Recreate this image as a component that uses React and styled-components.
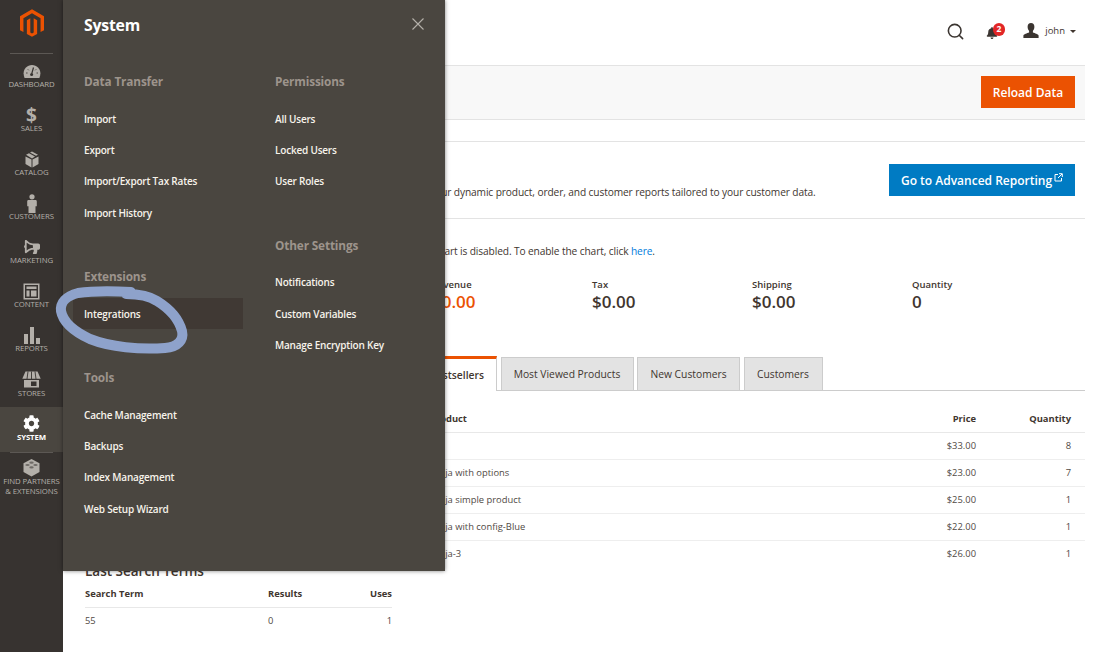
import React from "react";
import styled, { createGlobalStyle } from "styled-components";
import { FaCog, FaBell, FaBullhorn } from "react-icons/fa";
import { Search } from "lucide-react";

const Global = createGlobalStyle`
  html, body { margin: 0; padding: 0; background: #fff; }
  * { box-sizing: border-box; }
  body { font-family: "Open Sans", "Liberation Sans", sans-serif; color: #41362f; }
`;

const Page = styled.div`
  position: relative;
  width: 1100px;
  height: 652px;
  overflow: hidden;
  display: flex;
  background: #fff;
`;

const Sidebar = styled.nav`
  width: 63px;
  flex: none;
  height: 652px;
  background: #373330;
  display: flex;
  flex-direction: column;
  align-items: stretch;
`;

const LogoBox = styled.div`
  height: 54px;
  margin: 0 10px;
  padding-top: 9px;
  border-bottom: 1px solid #5c5854;
  display: flex;
  justify-content: center;
  align-items: flex-start;
`;

const SideItem = styled.div`
  height: ${(p) => p.$h || 44.1}px;
  display: flex;
  flex-direction: column;
  align-items: center;
  background: ${(p) => (p.$active ? "#4a4640" : "transparent")};
  color: ${(p) => (p.$active ? "#fff" : "#b3afa9")};
  padding-top: ${(p) => p.$pt ?? 9.5}px;
`;

const SideIcon = styled.div`
  height: 15px;
  display: flex;
  align-items: center;
  justify-content: center;
`;

const Dollar = styled.span`
  font: 700 19px/20px "Open Sans", sans-serif;
`;

const Megaphone = styled(FaBullhorn)`
  transform: scaleX(-1);
`;

const SideLabel = styled.div`
  font-size: 7.8px;
  line-height: 10px;
  margin-top: 0.5px;
  letter-spacing: -0.1px;
  text-transform: uppercase;
  text-align: center;
  font-weight: ${(p) => (p.$active ? 700 : 400)};
  white-space: nowrap;
`;

const Divider = styled.div`
  height: 1px;
  margin: 0 10px;
  background: #5c5854;
`;

const Main = styled.main`
  flex: 1;
  min-width: 0;
  padding-right: 15px;
  display: flex;
  flex-direction: column;
`;

const TopBar = styled.header`
  height: 65px;
  display: flex;
  align-items: center;
  justify-content: flex-end;
  padding-right: 9px;
`;

const SearchWrap = styled.div`
  display: flex;
  margin-right: 21px;
  color: #3b3531;
  margin-top: -3px;
`;

const BellWrap = styled.div`
  position: relative;
  display: flex;
  color: #3b3531;
  margin-right: 25px;
  margin-top: 1px;
`;

const Badge = styled.span`
  position: absolute;
  left: 6.5px;
  top: -4px;
  width: 12.5px;
  height: 12.5px;
  border-radius: 50%;
  background: #e22626;
  color: #fff;
  font: 700 8.5px/12.5px "Open Sans", sans-serif;
  text-align: center;
`;

const UserName = styled.span`
  font-size: 9.5px;
  margin-left: 6px;
  color: #41362f;
`;

const UserBox = styled.div`
  display: flex;
  align-items: center;
  margin-top: -4px;
`;

const Caret = styled.span`
  width: 0;
  height: 0;
  margin-left: 5px;
  margin-top: 2px;
  border-left: 3px solid transparent;
  border-right: 3px solid transparent;
  border-top: 3.5px solid #41362f;
`;

const ActionBar = styled.div`
  height: 55px;
  background: #f8f8f8;
  border-top: 1px solid #e3e3e3;
  border-bottom: 1px solid #e3e3e3;
  display: flex;
  align-items: center;
  justify-content: flex-end;
  padding: 0 10px 1px 0;
`;

const OrangeButton = styled.button`
  width: 94px;
  height: 32px;
  border: none;
  background: #eb5202;
  color: #fff;
  font: 600 12px "Open Sans", sans-serif;
  padding: 0;
`;

const ReportSection = styled.section`
  margin-top: 21px;
  height: 78px;
  border-top: 1px solid #e3e3e3;
  border-bottom: 1px solid #e3e3e3;
  display: flex;
  justify-content: space-between;
  padding: 22px 10px 0 22px;
`;

const ReportText = styled.div`
  display: flex;
  flex-direction: column;
  white-space: nowrap;
`;

const ReportTitle = styled.h2`
  margin: 0 0 1px;
  font-size: 14px;
  line-height: 20px;
  font-weight: 600;
  color: #41362f;
`;

const ReportDesc = styled.p`
  margin: 0;
  font-size: 10.2px;
  letter-spacing: -0.12px;
  line-height: 14px;
  color: #41362f;
`;

const BlueButton = styled.button`
  width: 186px;
  height: 32px;
  border: none;
  background: #007bc3;
  color: #fff;
  font: 600 12px "Open Sans", sans-serif;
  display: flex;
  align-items: center;
  justify-content: center;
  gap: 2px;
  padding: 0;
`;

const ChartNote = styled.p`
  margin: 25px 0 0 369px;
  font-size: 10.2px;
  letter-spacing: -0.12px;
  line-height: 14px;
  color: #41362f;
`;

const NoteLink = styled.span`
  color: #007bdb;
`;

const Totals = styled.div`
  display: flex;
  margin: 20px 0 0 49px;
`;

const Total = styled.div`
  width: 160px;
  display: flex;
  flex-direction: column;
`;

const TotalLabel = styled.div`
  font-size: 9.5px;
  line-height: 13px;
  font-weight: 600;
  color: #41362f;
`;

const TotalValue = styled.div`
  font-size: 17px;
  line-height: 21px;
  font-weight: 600;
  color: ${(p) => (p.$red ? "#eb5202" : "#41362f")};
`;

const Columns = styled.div`
  display: grid;
  grid-template-columns: 307px 673px;
  column-gap: 20px;
  margin-left: 22px;
`;

const LeftCol = styled.div`
  padding-top: 250px;
`;

const SearchTitle = styled.h3`
  margin: 0;
  font-size: 13.5px;
  line-height: 18px;
  font-weight: 600;
  color: #41362f;
`;

const RightCol = styled.div`
  margin-top: 44px;
`;

const Tabs = styled.div`
  display: flex;
  align-items: flex-end;
  gap: 3.5px;
  height: 35px;
  border-bottom: 1px solid #ccc;
`;

const Tab = styled.div`
  width: ${(p) => p.$w}px;
  height: ${(p) => (p.$active ? 35 : 34)}px;
  margin-bottom: -1px;
  display: flex;
  align-items: center;
  justify-content: center;
  font-size: 10.3px;
  color: #41362f;
  padding-left: ${(p) => (p.$active ? 6 : 0)}px;
  font-weight: ${(p) => (p.$active ? 600 : 400)};
  background: ${(p) => (p.$active ? "#fff" : "#e3e3e3")};
  border: 1px solid #ccc;
  border-bottom: ${(p) => (p.$active ? "none" : "1px solid #ccc")};
  border-top: ${(p) => (p.$active ? "3px solid #eb5202" : "1px solid #ccc")};
  border-left: ${(p) => (p.$active ? "none" : "1px solid #ccc")};
`;

const DataTable = styled.table`
  width: 100%;
  border-collapse: collapse;
  table-layout: fixed;
  font-size: 9.4px;
  color: #514a45;
`;

const WideTable = styled(DataTable)`
  margin-top: 14px;
`;

const Th = styled.th`
  height: 27px;
  padding: 0 ${(p) => p.$pr ?? 0}px 0 ${(p) => p.$pl ?? 0}px;
  text-align: ${(p) => p.$align || "left"};
  font-weight: 700;
  color: #41362f;
  border-bottom: 1px solid #e8e8e8;
  width: ${(p) => (p.$w ? `${p.$w}px` : "auto")};
`;

const Td = styled.td`
  height: 27px;
  padding: 0 ${(p) => p.$pr ?? 0}px 0 ${(p) => p.$pl ?? 0}px;
  text-align: ${(p) => p.$align || "left"};
  border-bottom: 1px solid ${(p) => (p.$last ? "transparent" : "#eeeeee")};
`;

const Panel = styled.aside`
  position: absolute;
  left: 63px;
  top: 0;
  width: 382px;
  height: 571px;
  background: #4a4640;
  box-shadow: 0 0 4px rgba(0, 0, 0, 0.5);
  color: #fff;
  padding: 15px 0 0 21px;
`;

const PanelTitle = styled.h1`
  margin: 0 0 35px;
  font-size: 15.8px;
  line-height: 20px;
  font-weight: 700;
  letter-spacing: -0.2px;
`;

const CloseBtn = styled.div`
  position: absolute;
  left: 349px;
  top: 18px;
  display: flex;
`;

const PanelCols = styled.div`
  display: grid;
  grid-template-columns: 191px 1fr;
`;

const PanelCol = styled.div`
  display: flex;
  flex-direction: column;
  gap: 36.5px;
`;

const GroupHead = styled.h3`
  margin: 0 0 11px;
  font-size: 11.8px;
  letter-spacing: -0.15px;
  line-height: 22px;
  font-weight: 700;
  color: #9d948c;
`;

const MenuRow = styled.div`
  height: 31.4px;
  width: 170px;
  margin-left: -11px;
  padding-left: 11px;
  display: flex;
  align-items: center;
  font-size: 10px;
  letter-spacing: -0.2px;
  font-weight: 600;
  color: #f7f3eb;
  background: ${(p) => (p.$active ? "#403934" : "transparent")};
`;

const Scribble = styled.svg`
  position: absolute;
  left: 0;
  top: 0;
  pointer-events: none;
`;

const Logo = () => (
  <svg width="24" height="28" viewBox="0 0 44 50" fill="#eb5202">
    <path d="M22 0 44 12.7V38.1L37.7 41.7V16.4L22 7.3 6.3 16.4V41.7L0 38.1V12.7Z" />
    <path d="M25.1 42.6V16.4L31.4 20V45.3L22 50 12.6 45.3V20L18.9 16.4V42.6L22 44.4Z" />
  </svg>
);

const DashIcon = () => (
  <svg width="18" height="15" viewBox="0 0 18 15" fill="currentColor">
    <path d="M9 1C4.2 1 .6 4.8.6 9.3c0 1.7.4 3.3 1 4.7h14.8c.6-1.4 1-3 1-4.7C17.4 4.8 13.8 1 9 1Z" />
    <path d="M10.5 3.5 8.8 9.5" stroke="#373330" strokeWidth="1.2" />
    <circle cx="8.6" cy="10.5" r="1.5" fill="#373330" />
    <path d="M3 9h1.6M4.8 5.3l1 1M13.2 5.3l-1 1M13.5 9H15" stroke="#373330" strokeWidth=".8" />
  </svg>
);

const BoxIcon = () => (
  <svg width="14" height="17" viewBox="0 0 14 17" fill="currentColor">
    <path d="M6.5 8.5 0.5 5.5V13l6 3.5Z" />
    <path d="M7.5 8.5 13.5 5.5V13l-6 3.5Z" />
    <path d="M7 .5 5 1.6 11 4.8 13 3.8ZM4 2.2 1 3.8 7 7.5 10 5.5Z" />
  </svg>
);

const PersonIcon = () => (
  <svg width="10" height="19" viewBox="0 0 10 19" fill="currentColor">
    <circle cx="5" cy="2.8" r="2.6" />
    <path d="M1.5 6h7c.8 0 1.3.6 1.3 1.4v4.8H8.5V19H1.5V12.2H.2V7.4C.2 6.6.7 6 1.5 6Z" />
  </svg>
);

const ContentIcon = () => (
  <svg width="17" height="17" viewBox="0 0 17 17" fill="currentColor">
    <path fillRule="evenodd" d="M.5.5h16v16H.5ZM2 2v13h13V2Z" />
    <path d="M3.5 3.5h10V6h-10ZM3.5 7.5h3V13.5h-3ZM8 7.5h5.5V13.5H8Z" />
  </svg>
);

const BarsIcon = () => (
  <svg width="16" height="17" viewBox="0 0 16 17" fill="currentColor">
    <path d="M0 7h4v10H0ZM6 0h4v17H6ZM12 11h4v6h-4Z" />
  </svg>
);

const StoreIcon = () => (
  <svg width="19" height="17" viewBox="0 0 19 17" fill="currentColor">
    <path d="M3.5.5h12l3.2 7.3H.3Z" />
    <path d="M6 .5 5 8M9.5.5V8M13 .5 14 8" stroke="#373330" strokeWidth=".9" />
    <path d="M2 9h15v7.5H2ZM9 10.5v4.5h5.5v-4.5Z" fillRule="evenodd" />
  </svg>
);

const BrickIcon = () => (
  <svg width="17" height="18" viewBox="0 0 17 18" fill="currentColor">
    <path d="M8.5 0 16.5 4.2V13L8.5 17.5.5 13V4.2Z" />
    <ellipse cx="8.5" cy="3.7" rx="2.2" ry="1.1" fill="#373330" opacity=".55" />
    <ellipse cx="4.5" cy="6" rx="2.2" ry="1.1" fill="#373330" opacity=".55" />
    <ellipse cx="12.5" cy="6" rx="2.2" ry="1.1" fill="#373330" opacity=".55" />
    <ellipse cx="8.5" cy="8.4" rx="2.2" ry="1.1" fill="#373330" opacity=".55" />
  </svg>
);

const UserIcon = () => (
  <svg width="16" height="15" viewBox="0 0 16 15" fill="#3b3531">
    <path d="M8 0c2.2 0 3.4 1.6 3.4 3.8 0 1.8-.7 3.2-1.5 4.1v1.5c2 .8 5.3 1.5 5.7 3.1V15H.4v-2.5C.8 10.9 4.1 10.2 6.1 9.4V7.9C5.3 7 4.6 5.6 4.6 3.8 4.6 1.6 5.8 0 8 0Z" />
  </svg>
);

const ExternalMark = styled.svg`
  margin-top: -6px;
`;

const ExternalIcon = () => (
  <ExternalMark width="9" height="9" viewBox="0 0 9 9" fill="none" stroke="#fff" strokeWidth="1">
    <path d="M4 1.5H1V8h6.5V5M4 5l4-4M5 .7h3.3V4" />
  </ExternalMark>
);

const navItems = [
  { label: "Dashboard", icon: <DashIcon /> },
  { label: "Sales", icon: <Dollar>$</Dollar> },
  { label: "Catalog", icon: <BoxIcon /> },
  { label: "Customers", icon: <PersonIcon /> },
  { label: "Marketing", icon: <Megaphone size={16} /> },
  { label: "Content", icon: <ContentIcon /> },
  { label: "Reports", icon: <BarsIcon /> },
  { label: "Stores", icon: <StoreIcon /> },
];

const menuLeft = [
  { head: "Data Transfer", items: ["Import", "Export", "Import/Export Tax Rates", "Import History"] },
  { head: "Extensions", items: ["Integrations"] },
  { head: "Tools", items: ["Cache Management", "Backups", "Index Management", "Web Setup Wizard"] },
];

const menuRight = [
  { head: "Permissions", items: ["All Users", "Locked Users", "User Roles"] },
  { head: "Other Settings", items: ["Notifications", "Custom Variables", "Manage Encryption Key"] },
];

const products = [
  ["Set", "$33.00", "8"],
  ["Ninja with options", "$23.00", "7"],
  ["Ninja simple product", "$25.00", "1"],
  ["Ninja with config-Blue", "$22.00", "1"],
  ["Ninja-3", "$26.00", "1"],
];

const MenuGroups = ({ groups }) => (
  <PanelCol>
    {groups.map((g) => (
      <div key={g.head}>
        <GroupHead>{g.head}</GroupHead>
        {g.items.map((it) => (
          <MenuRow key={it} $active={it === "Integrations"}>{it}</MenuRow>
        ))}
      </div>
    ))}
  </PanelCol>
);

export default function App() {
  return (
    <Page>
      <Global />
      <Sidebar>
        <LogoBox><Logo /></LogoBox>
        <SideItem $h={44}>
          <SideIcon>{navItems[0].icon}</SideIcon>
          <SideLabel>{navItems[0].label}</SideLabel>
        </SideItem>
        {navItems.slice(1).map((n) => (
          <SideItem key={n.label}>
            <SideIcon>{n.icon}</SideIcon>
            <SideLabel>{n.label}</SideLabel>
          </SideItem>
        ))}
        <SideItem $active $h={45}>
          <SideIcon><FaCog size={17} /></SideIcon>
          <SideLabel $active>System</SideLabel>
        </SideItem>
        <Divider />
        <SideItem $h={56} $pt={8}>
          <SideIcon><BrickIcon /></SideIcon>
          <SideLabel>Find Partners<br />&amp; Extensions</SideLabel>
        </SideItem>
      </Sidebar>

      <Main>
        <TopBar>
          <SearchWrap><Search size={19} strokeWidth={2} /></SearchWrap>
          <BellWrap>
            <FaBell size={12} />
            <Badge>2</Badge>
          </BellWrap>
          <UserBox>
            <UserIcon />
            <UserName>john</UserName>
            <Caret />
          </UserBox>
        </TopBar>
        <ActionBar><OrangeButton>Reload Data</OrangeButton></ActionBar>
        <ReportSection>
          <ReportText>
            <ReportTitle>Advanced Reporting</ReportTitle>
            <ReportDesc>Gain new insights and take command of your business' performance, using our dynamic product, order, and customer reports tailored to your customer data.</ReportDesc>
          </ReportText>
          <BlueButton>Go to Advanced Reporting <ExternalIcon /></BlueButton>
        </ReportSection>
        <ChartNote>Chart is disabled. To enable the chart, click <NoteLink>here</NoteLink>.</ChartNote>
        <Totals>
          <Total><TotalLabel>Lifetime Sales</TotalLabel><TotalValue>$0.00</TotalValue></Total>
          <Total><TotalLabel>Average Order</TotalLabel><TotalValue>$0.00</TotalValue></Total>
          <Total><TotalLabel>Revenue</TotalLabel><TotalValue $red>$0.00</TotalValue></Total>
          <Total><TotalLabel>Tax</TotalLabel><TotalValue>$0.00</TotalValue></Total>
          <Total><TotalLabel>Shipping</TotalLabel><TotalValue>$0.00</TotalValue></Total>
          <Total><TotalLabel>Quantity</TotalLabel><TotalValue>0</TotalValue></Total>
        </Totals>
        <Columns>
          <LeftCol>
            <SearchTitle>Last Search Terms</SearchTitle>
            <DataTable>
              <thead>
                <tr>
                  <Th>Search Term</Th>
                  <Th $w={64}>Results</Th>
                  <Th $w={60} $align="right">Uses</Th>
                </tr>
              </thead>
              <tbody>
                <tr>
                  <Td $last>55</Td>
                  <Td $last>0</Td>
                  <Td $last $align="right">1</Td>
                </tr>
              </tbody>
            </DataTable>
          </LeftCol>
          <RightCol>
            <Tabs>
              <Tab $active $w={85}>Bestsellers</Tab>
              <Tab $w={133}>Most Viewed Products</Tab>
              <Tab $w={103}>New Customers</Tab>
              <Tab $w={79}>Customers</Tab>
            </Tabs>
            <WideTable>
              <thead>
                <tr>
                  <Th $pl={18}>Product</Th>
                  <Th $w={100} $align="right">Price</Th>
                  <Th $w={109} $align="right" $pr={14}>Quantity</Th>
                </tr>
              </thead>
              <tbody>
                {products.map((p, i) => (
                  <tr key={p[0]}>
                    <Td $pl={18} $last={i === products.length - 1}>{p[0]}</Td>
                    <Td $align="right" $last={i === products.length - 1}>{p[1]}</Td>
                    <Td $align="right" $pr={14} $last={i === products.length - 1}>{p[2]}</Td>
                  </tr>
                ))}
              </tbody>
            </WideTable>
          </RightCol>
        </Columns>
      </Main>

      <Panel>
        <PanelTitle>System</PanelTitle>
        <CloseBtn>
          <svg width="12" height="12" viewBox="0 0 12 12" stroke="#b5b1aa" strokeWidth="1.1" fill="none">
            <path d="M.5.5l11 11M11.5.5l-11 11" />
          </svg>
        </CloseBtn>
        <PanelCols>
          <MenuGroups groups={menuLeft} />
          <MenuGroups groups={menuRight} />
        </PanelCols>
      </Panel>

      <Scribble width="1100" height="652" viewBox="0 0 1100 652" fill="none">
        <path
          d="M131 292C112 291 92 291 78 293C66 296 60 303 61 311C63 322 73 331 90 339C110 347 140 350 165 348C178 347 184 340 182 331C179 320 170 309 157 301C148 295 136 294 126 294"
          stroke="#8ea2cb"
          strokeWidth="10"
          strokeLinecap="round"
          strokeLinejoin="round"
        />
      </Scribble>
    </Page>
  );
}
